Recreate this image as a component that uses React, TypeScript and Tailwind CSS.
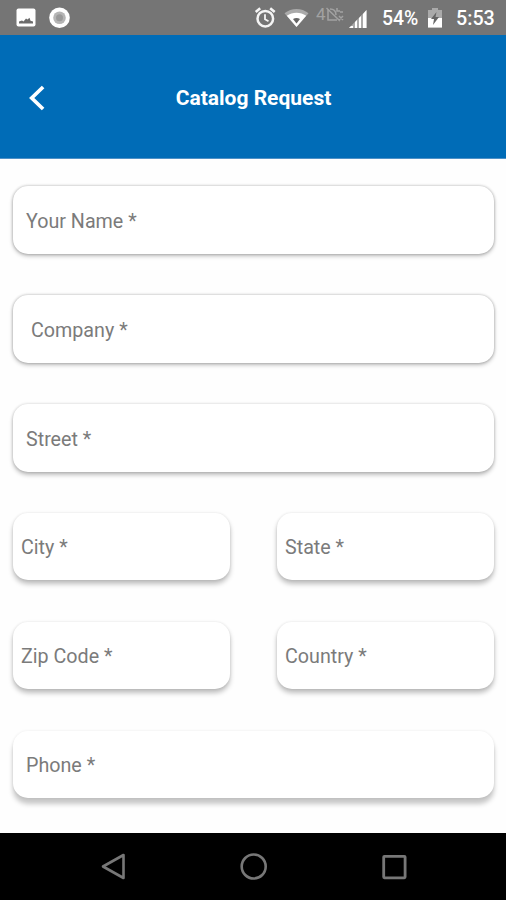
import React from "react";

const FIELD_SHADOWS = {
  light: "shadow-[0_0_3px_rgba(0,0,0,0.26),0_2px_4px_rgba(0,0,0,0.25)]",
  medium: "shadow-[0_0_3px_rgba(0,0,0,0.18),0_3px_4px_rgba(0,0,0,0.25)]",
  deep: "shadow-[0_0_3px_rgba(0,0,0,0.1),0_4px_5px_rgba(0,0,0,0.25)]",
  deepest: "shadow-[0_0_3px_rgba(0,0,0,0.08),0_6px_5px_rgba(0,0,0,0.22)]",
};

type FieldProps = {
  label: string;
  shadow: keyof typeof FIELD_SHADOWS;
  inset?: string;
};

function Field({ label, shadow, inset = "pl-[13px]" }: FieldProps) {
  return (
    <div
      className={`flex flex-1 items-center rounded-[15px] bg-white pt-[3px] text-[19.7px] text-[#7b7b7b] ${inset} ${FIELD_SHADOWS[shadow]}`}
    >
      <span>{label}</span>
    </div>
  );
}

function StatusBar() {
  return (
    <div className="flex h-[35px] shrink-0 items-center bg-[#757575] text-white">
      <svg className="ml-4 h-5 w-5" viewBox="0 0 20 20">
        <rect x="0.5" y="0.5" width="19" height="18" rx="2" fill="#fff" />
        <path d="M3 15.5v-2l3-1 1.5 1L10 10.5l1.5 1 2-1.7 1 3 2.5.7v2z" fill="#6c6c6c" />
      </svg>
      <svg className="ml-3 h-[22px] w-[22px]" viewBox="0 0 22 22">
        <circle cx="11.5" cy="10.7" r="10.3" fill="#fff" />
        <circle cx="11.5" cy="10.7" r="6.3" fill="#b5b5b5" />
        <circle cx="11.5" cy="10.7" r="3.5" fill="#999" />
      </svg>
      <svg className="ml-[184px] h-[22px] w-[22px]" viewBox="0 0 22 22" fill="none" stroke="#f4f4f4">
        <circle cx="11.3" cy="11.7" r="7.8" strokeWidth="2.5" />
        <path d="M11 7.2v5l3.5 2" strokeWidth="1.8" />
        <path d="M1.7 5 6.2 1.3M20.7 5 16.2 1.3" strokeWidth="2.6" />
      </svg>
      <svg className="ml-[8px] h-5 w-[25px]" viewBox="0 0 25 20">
        <path d="M0.5 5.3C7.5-.6 17.5-.6 24.5 5.3L12.5 19z" fill="#aaa" />
        <path d="M2.8 7.8C8.5 3.6 16.5 3.6 22.2 7.8L12.5 19z" fill="#fff" />
        <path d="M9 11q3.5-1.8 7 0l-3.5 4.5z" fill="#666" />
      </svg>
      <div className="relative mb-[7px] ml-[7px] h-[17px] w-[28px] text-[17px] leading-[17px] text-[#a2a2a2]">
        <span>4</span>
        <svg className="absolute inset-0" viewBox="0 0 28 17" fill="none" stroke="#a2a2a2" strokeWidth="1.5">
          <path d="m10.5 2 13.5 13M12 3v11h9M14 3q6 0 6 6M21 2v3h3M24 6h3M23 10l4 4m0-4-4 4" />
        </svg>
      </div>
      <svg className="mt-[3px] ml-[5px] h-[18px] w-[18px]" viewBox="0 0 18 18">
        <path d="M0 18 17.5 0v18z" fill="#aaa" />
        <path d="M2 16h2v2H0zM6 12l2-2v8H6zM10 8l2-2v12h-2zM14 4l3.5-4v18H14z" fill="#fff" />
      </svg>
      <span className="mt-[3px] ml-[15px] w-[38px] text-[19.4px] font-medium">54%</span>
      <svg className="mt-[1px] ml-[8px] h-5 w-[14px]" viewBox="0 0 14 20">
        <path d="M4 0h6v2h4v17.5H0V2h4z" fill="#aaa" />
        <path d="M0 10h14v9.5H0z" fill="#fff" />
        <path d="M8.5 4 3 11h3l-1 6 6-8H7.5z" fill="#666" />
      </svg>
      <span className="mt-[3px] ml-[14px] text-[19.7px] font-medium">5:53</span>
    </div>
  );
}

function Header() {
  return (
    <header className="grid h-[124px] shrink-0 grid-cols-[80px_1fr_80px] items-center border-b border-[#4e91c7] bg-[#006cb7] text-white">
      <svg className="mt-[2px] ml-[29px] h-[26px] w-4" viewBox="0 0 16 26" fill="none" stroke="#fff" strokeWidth="3.7">
        <path d="M14.1 2 2.7 13l11.4 11" />
      </svg>
      <h1 className="mt-[5px] ml-[1px] text-center text-[21px] font-bold">Catalog Request</h1>
    </header>
  );
}

function NavigationBar() {
  return (
    <nav className="flex h-[67px] shrink-0 items-center bg-black">
      <svg className="ml-[101px] h-7 w-[25px]" viewBox="0 0 25 28" fill="none" stroke="#777" strokeWidth="2.6">
        <path d="M22.5 2v23L2 13.5z" strokeLinejoin="round" />
      </svg>
      <svg className="ml-[114px] h-7 w-7" viewBox="0 0 28 28" fill="none" stroke="#777" strokeWidth="2.6">
        <circle cx="13.7" cy="13.5" r="12" />
      </svg>
      <svg className="ml-[113px] h-[26px] w-[26px]" viewBox="0 0 26 26" fill="none" stroke="#777" strokeWidth="2.8">
        <rect x="2.7" y="2.4" width="21.4" height="21.4" rx="0.7" />
      </svg>
    </nav>
  );
}

export default function App() {
  return (
    <div className="flex h-[900px] w-[506px] flex-col overflow-hidden bg-[#fefefe] font-[Roboto,sans-serif]">
      <StatusBar />
      <Header />
      <main className="flex flex-1 flex-col gap-[41px] pt-[27px] pr-3 pl-[13px]">
        <div className="flex h-[68px]"><Field label="Your Name *" shadow="light" /></div>
        <div className="flex h-[68px]"><Field label="Company *" shadow="light" inset="pl-[18px]" /></div>
        <div className="flex h-[68px]"><Field label="Street *" shadow="medium" /></div>
        <div className="flex h-[67px] gap-[47px]">
          <Field label="City *" shadow="deep" inset="pl-2" />
          <Field label="State *" shadow="deep" inset="pl-2" />
        </div>
        <div className="mt-px flex h-[67px] gap-[47px]">
          <Field label="Zip Code *" shadow="deep" inset="pl-2" />
          <Field label="Country *" shadow="deep" inset="pl-2" />
        </div>
        <div className="mt-px flex h-[67px]"><Field label="Phone *" shadow="deepest" /></div>
      </main>
      <NavigationBar />
    </div>
  );
}
